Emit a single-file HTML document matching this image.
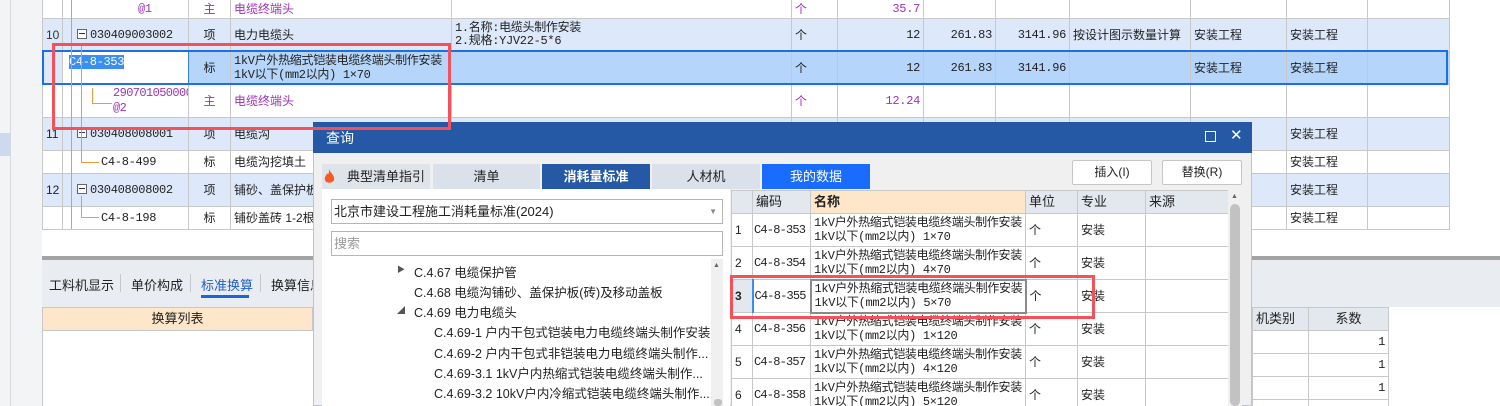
<!DOCTYPE html>
<html><head><meta charset="utf-8"><style>
*{margin:0;padding:0;box-sizing:border-box}
html,body{width:1500px;height:406px;overflow:hidden}
body{background:#fff;font-family:"Liberation Sans","Noto Sans CJK SC",sans-serif;font-size:12px;color:#222;position:relative}
.a{position:absolute}
table{border-collapse:collapse;table-layout:fixed;position:absolute}
td{border:1px solid #c8c8c8;padding:0 3px;white-space:nowrap;overflow:hidden;font-size:12px;line-height:14px;vertical-align:middle}
.b td{background:#dde9fb}
.p td{color:#9b34b8}
.r{text-align:right}
.c{text-align:center}
.m{font-family:"Liberation Mono","Noto Sans CJK SC",monospace;font-size:12px;letter-spacing:-0.3px}
.k{padding:0 1px;letter-spacing:-0.8px}
.mb{display:inline-block;width:10px;height:10px;border:1px solid #666;background:#fff;position:relative;vertical-align:-1px;margin-right:3px}
.mb:after{content:"";position:absolute;left:1px;top:3px;width:6px;height:1px;background:#333}
</style></head><body>
<div class="a" style="left:0;top:0;width:42px;height:406px;background:#f3f4f6"></div>
<div class="a" style="left:10px;top:0;width:1px;height:406px;background:#d6d9de"></div>
<div class="a" style="left:0;top:133px;width:10px;height:23px;background:#cdd9ee"></div>

<table style="left:42px;top:-1px;width:1407px">
<colgroup><col style="width:20px"><col style="width:126px"><col style="width:42px"><col style="width:221px"><col style="width:340px"><col style="width:46px"><col style="width:86px"><col style="width:72px"><col style="width:74px"><col style="width:121px"><col style="width:96px"><col style="width:81px"><col style="width:82px"></colgroup>
<tr class="p" style="height:19px"><td></td><td class="m" style="padding-left:75px">@1</td><td class="c">主</td><td>电缆终端头</td><td></td><td>个</td><td class="r m">35.7</td><td></td><td></td><td></td><td></td><td></td><td></td></tr>
<tr class="b" style="height:33px"><td style="color:#333">10</td><td class="m" style="padding-left:14px"><span class="mb"></span>030409003002</td><td class="c">项</td><td>电力电缆头</td><td class="m" style="line-height:13px">1.名称:电缆头制作安装<br>2.规格:YJV22-5*6</td><td>个</td><td class="r m">12</td><td class="r m">261.83</td><td class="r m">3141.96</td><td>按设计图示数量计算</td><td>安装工程</td><td>安装工程</td><td></td></tr>
<tr style="height:33px;background:#b5d5fa"><td style="background:#dde9fb"></td><td class="m" style="background:#fff;border:1px solid #3a7de0;vertical-align:top;padding-top:3px;padding-left:6px"><span style="background:#3a8ef0;color:#fff">C4-8-353</span></td><td class="c">标</td><td colspan="2" class="m" style="line-height:14px">1kV户外热缩式铠装电缆终端头制作安装<br>1kV以下(mm2以内) 1×70</td><td>个</td><td class="r m">12</td><td class="r m">261.83</td><td class="r m">3141.96</td><td></td><td>安装工程</td><td>安装工程</td><td></td></tr>
<tr class="p" style="height:33px"><td></td><td class="m" style="padding-left:50px;line-height:15px;letter-spacing:-0.6px">290701050000<br>@2</td><td class="c">主</td><td>电缆终端头</td><td></td><td>个</td><td class="r m">12.24</td><td></td><td></td><td></td><td></td><td></td><td></td></tr>
<tr class="b" style="height:33px"><td>11</td><td class="m" style="padding-left:14px"><span class="mb"></span>030408008001</td><td class="c">项</td><td>电缆沟</td><td></td><td></td><td></td><td></td><td></td><td></td><td></td><td>安装工程</td><td></td></tr>
<tr style="height:23px"><td></td><td class="m" style="padding-left:38px">C4-8-499</td><td class="c">标</td><td>电缆沟挖填土</td><td></td><td></td><td></td><td></td><td></td><td></td><td></td><td>安装工程</td><td></td></tr>
<tr class="b" style="height:33px"><td>12</td><td class="m" style="padding-left:14px"><span class="mb"></span>030408008002</td><td class="c">项</td><td>铺砂、盖保护板</td><td></td><td></td><td></td><td></td><td></td><td></td><td></td><td>安装工程</td><td></td></tr>
<tr style="height:23px"><td></td><td class="m" style="padding-left:38px">C4-8-198</td><td class="c">标</td><td>铺砂盖砖 1-2根</td><td></td><td></td><td></td><td></td><td></td><td></td><td></td><td>安装工程</td><td></td></tr>
</table>
<div class="a" style="left:42px;top:50px;width:1406px;height:35px;border:2px solid #1e6fe0"></div>
<div class="a" style="left:71px;top:0;width:1px;height:229px;background:#f39a3a"></div>
<div class="a" style="left:81px;top:44px;width:1px;height:118px;background:#f39a3a"></div>
<div class="a" style="left:92px;top:88px;width:1px;height:15px;background:#f39a3a"></div>
<div class="a" style="left:92px;top:103px;width:20px;height:1px;background:#f39a3a"></div>
<div class="a" style="left:81px;top:162px;width:18px;height:1px;background:#f39a3a"></div>
<div class="a" style="left:81px;top:196px;width:1px;height:21px;background:#f39a3a"></div>
<div class="a" style="left:81px;top:217px;width:18px;height:1px;background:#f39a3a"></div>

<div class="a" style="left:42px;top:256px;width:1458px;height:4px;background:#a3a3a3"></div>
<div class="a" style="left:42px;top:260px;width:1458px;height:47px;background:#e9ecf0"></div>
<div class="a" style="left:49px;top:275px;font-size:13px">工料机显示</div>
<div class="a" style="left:120px;top:274px;width:1px;height:18px;background:#c8c8c8"></div>
<div class="a" style="left:131px;top:275px;font-size:13px">单价构成</div>
<div class="a" style="left:190px;top:274px;width:1px;height:18px;background:#c8c8c8"></div>
<div class="a" style="left:201px;top:275px;font-size:13px;color:#1f5fc8">标准换算</div>
<div class="a" style="left:201px;top:295px;width:48px;height:3px;background:#1a66d8"></div>
<div class="a" style="left:260px;top:274px;width:1px;height:18px;background:#c8c8c8"></div>
<div class="a" style="left:271px;top:275px;font-size:13px">换算信息</div>
<div class="a" style="left:42px;top:307px;width:271px;height:99px;background:#fff;border-left:1px solid #c8c8c8"></div>
<div class="a" style="left:42px;top:307px;width:271px;height:24px;background:#fde6c9;border:1px solid #c8c8c8;text-align:center;line-height:22px;font-size:13px">换算列表</div>
<div class="a" style="left:1252px;top:307px;width:248px;height:99px;background:#fff"></div>
<table style="left:1252px;top:307px;width:136px">
<colgroup><col style="width:56px"><col style="width:80px"></colgroup>
<tr style="height:23px;background:#e3e8ef"><td style="font-size:13px">机类别</td><td class="c" style="font-size:13px">系数</td></tr>
<tr style="height:23px"><td></td><td class="r m">1</td></tr>
<tr style="height:23px"><td></td><td class="r m">1</td></tr>
<tr style="height:23px"><td></td><td class="r m">1</td></tr>
<tr style="height:23px"><td></td><td></td></tr>
</table>

<div class="a" style="left:313px;top:122px;width:939px;height:284px;background:#f0f0f0;border:1px solid #bcc4cf"></div>
<div class="a" style="left:313px;top:122px;width:939px;height:31px;background:#2659a5;color:#fff;font-size:14px;line-height:33px;padding-left:13px">查询</div>
<div class="a" style="left:1205px;top:131px;width:11px;height:11px;border:1.5px solid #fff"></div>
<div class="a" style="left:1230px;top:126px;color:#fff;font-size:15px">✕</div>
<div class="a" style="left:322px;top:164px;width:108px;height:25px;background:#dfe3ea;font-size:13px;line-height:25px;padding-left:25px">典型清单指引</div>
<svg class="a" style="left:324px;top:169px" width="11" height="15" viewBox="0 0 11 15"><path d="M5 0C6 4 11 6 10 11 9 14 2 15 1 11 0 8 3 6 3 4 4 6 5 6 5 0Z" fill="#f25a1e"/></svg>
<div class="a" style="left:433px;top:164px;width:107px;height:25px;background:#dbe1ea;font-size:13px;line-height:25px;text-align:center">清单</div>
<div class="a" style="left:542px;top:164px;width:108px;height:25px;background:#2659a5;color:#fff;font-weight:bold;font-size:13px;line-height:25px;text-align:center">消耗量标准</div>
<div class="a" style="left:652px;top:164px;width:108px;height:25px;background:#dbe1ea;font-size:13px;line-height:25px;text-align:center">人材机</div>
<div class="a" style="left:762px;top:164px;width:108px;height:25px;background:#1a6cff;color:#fff;font-size:13px;line-height:25px;text-align:center">我的数据</div>
<div class="a" style="left:1072px;top:160px;width:80px;height:25px;background:#fff;border:1px solid #c6c6c6;border-radius:2px;line-height:23px;text-align:center">插入(I)</div>
<div class="a" style="left:1162px;top:160px;width:80px;height:25px;background:#fff;border:1px solid #c6c6c6;border-radius:2px;line-height:23px;text-align:center">替换(R)</div>
<div class="a" style="left:322px;top:189px;width:408px;height:217px;background:#fff"></div>
<div class="a" style="left:331px;top:199px;width:392px;height:25px;border:1px solid #b5b5b5;line-height:23px;padding-left:2px;font-size:13px">北京市建设工程施工消耗量标准(2024)<span style="position:absolute;right:5px;color:#888;font-size:8px">▼</span></div>
<div class="a" style="left:331px;top:231px;width:392px;height:25px;border:1px solid #b5b5b5;line-height:23px;padding-left:2px;color:#999;font-size:13px">搜索</div>
<div class="a" style="left:711px;top:259px;width:12px;height:147px;background:#f0f0f0"></div>
<div class="a" style="left:713px;top:262px;font-size:7px;color:#666">▲</div>
<div class="a" style="left:714px;top:399px;width:8px;height:7px;background:#c2c2c2;border-radius:3px"></div>
<div class="a" style="left:397px;top:264px;font-size:8px;color:#555">▶</div>
<div class="a" style="left:414px;top:262px;font-size:12.5px">C.4.67 电缆保护管</div>
<div class="a" style="left:414px;top:282px;font-size:12.5px">C.4.68 电缆沟铺砂、盖保护板(砖)及移动盖板</div>
<div class="a" style="left:397px;top:305px;font-size:8px;color:#555">◢</div>
<div class="a" style="left:414px;top:302px;font-size:12.5px">C.4.69 电力电缆头</div>
<div class="a" style="left:434px;top:322px;font-size:12.5px">C.4.69-1 户内干包式铠装电力电缆终端头制作安装</div>
<div class="a" style="left:434px;top:343px;font-size:12.5px">C.4.69-2 户内干包式非铠装电力电缆终端头制作...</div>
<div class="a" style="left:434px;top:363px;font-size:12.5px">C.4.69-3.1 1kV户内热缩式铠装电缆终端头制作...</div>
<div class="a" style="left:434px;top:383px;font-size:12.5px">C.4.69-3.2 10kV户内冷缩式铠装电缆终端头制作...</div>
<div class="a" style="left:731px;top:190px;width:511px;height:216px;background:#fff"></div>
<table style="left:731px;top:190px;width:497px">
<colgroup><col style="width:21px"><col style="width:58px"><col style="width:215px"><col style="width:52px"><col style="width:68px"><col style="width:83px"></colgroup>
<tr style="height:23px;background:#e3e8ef"><td></td><td style="font-size:13px">编码</td><td style="background:#fde6c9;font-weight:bold;font-size:13px">名称</td><td style="font-size:13px">单位</td><td style="font-size:13px">专业</td><td style="font-size:13px">来源</td></tr>
<tr style="height:33px"><td>1</td><td class="m k">C4-8-353</td><td class="m">1kV户外热缩式铠装电缆终端头制作安装<br>1kV以下(mm2以内) 1×70</td><td>个</td><td>安装</td><td></td></tr>
<tr style="height:33px"><td>2</td><td class="m k">C4-8-354</td><td class="m">1kV户外热缩式铠装电缆终端头制作安装<br>1kV以下(mm2以内) 4×70</td><td>个</td><td>安装</td><td></td></tr>
<tr style="height:33px"><td style="font-weight:bold;background:#e3e8ef;border-right:2px solid #3a8ef0">3</td><td class="m k">C4-8-355</td><td class="m" style="border:2px solid #8a8a8a">1kV户外热缩式铠装电缆终端头制作安装<br>1kV以下(mm2以内) 5×70</td><td>个</td><td>安装</td><td></td></tr>
<tr style="height:33px"><td>4</td><td class="m k">C4-8-356</td><td class="m">1kV户外热缩式铠装电缆终端头制作安装<br>1kV以下(mm2以内) 1×120</td><td>个</td><td>安装</td><td></td></tr>
<tr style="height:33px"><td>5</td><td class="m k">C4-8-357</td><td class="m">1kV户外热缩式铠装电缆终端头制作安装<br>1kV以下(mm2以内) 4×120</td><td>个</td><td>安装</td><td></td></tr>
<tr style="height:33px"><td>6</td><td class="m k">C4-8-358</td><td class="m">1kV户外热缩式铠装电缆终端头制作安装<br>1kV以下(mm2以内) 5×120</td><td>个</td><td>安装</td><td></td></tr>
</table>
<div class="a" style="left:1228px;top:190px;width:14px;height:216px;background:#f0f0f0"></div>
<div class="a" style="left:1231px;top:193px;font-size:7px;color:#666">▲</div>
<div class="a" style="left:1230px;top:204px;width:10px;height:202px;background:#c2c2c2;border-radius:5px"></div>

<div class="a" style="left:52px;top:43px;width:399px;height:87px;border:3px solid #f5515a"></div>
<div class="a" style="left:730px;top:275px;width:365px;height:44px;border:3px solid #f5515a"></div>
</body></html>
